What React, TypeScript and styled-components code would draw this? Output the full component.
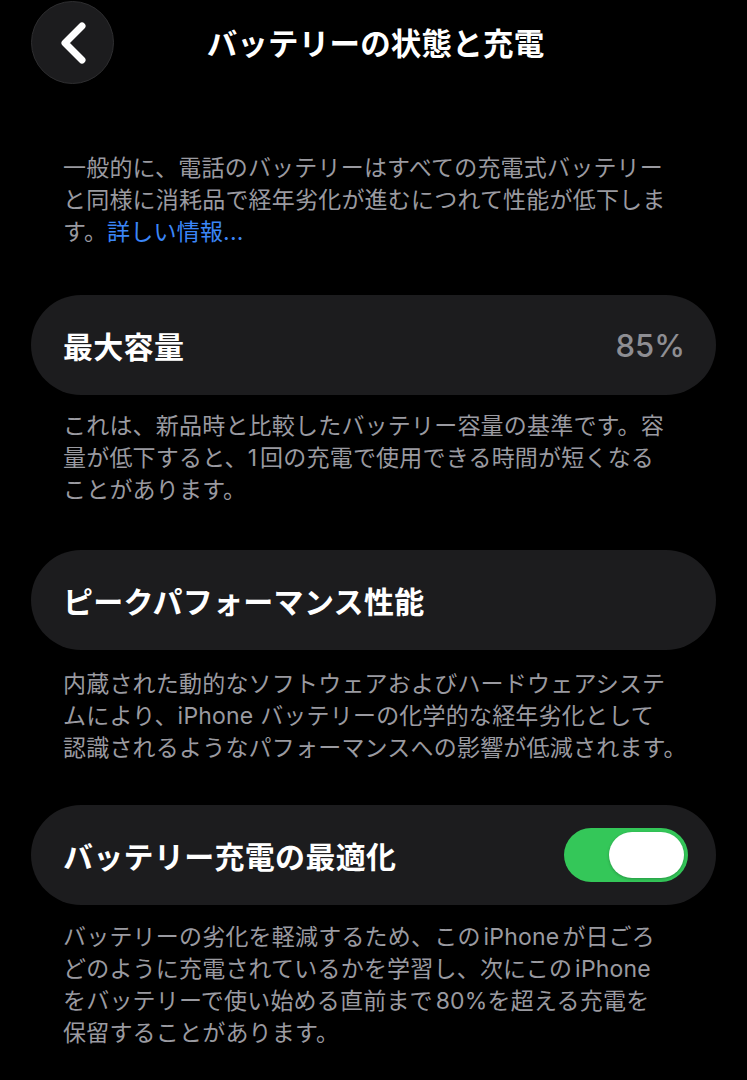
import React, { useState } from 'react';
import styled, { createGlobalStyle } from 'styled-components';

const GlobalStyle = createGlobalStyle`
  html, body {
    margin: 0;
    padding: 0;
    background: #000;
  }
  body {
    font-family: Inter, "Noto Sans CJK JP", sans-serif;
    -webkit-font-smoothing: antialiased;
  }
`;

const Page = styled.div`
  min-height: 1080px;
  background: #000;
  padding: 0 31px 40px;
  box-sizing: border-box;
`;

const Header = styled.header`
  display: grid;
  grid-template-columns: 1fr auto 1fr;
  align-items: center;
  height: 84px;
`;

const BackButton = styled.button`
  width: 83px;
  height: 83px;
  border-radius: 50%;
  background: #1c1c1e;
  border: 1.5px solid #2e2e30;
  display: flex;
  align-items: center;
  justify-content: center;
  padding: 0;
  margin-top: 1px;
  cursor: pointer;
  justify-self: start;
`;

const Title = styled.h1`
  margin: 0;
  color: #fff;
  font-size: 30.5px;
  font-weight: 700;
  letter-spacing: 0.2px;
  padding-left: 4px;
`;

const Note = styled.p<{ $top: number }>`
  margin: ${(p) => p.$top}px 0 0;
  padding: 0 32px;
  color: #9a9aa0;
  font-size: 23px;
  line-height: 32px;
  letter-spacing: 0.2px;
  white-space: nowrap;
  text-autospace: normal;
`;

const Link = styled.a`
  color: #3b86f7;
  text-decoration: none;
`;

const Card = styled.div<{ $top: number }>`
  margin-top: ${(p) => p.$top}px;
  height: 100px;
  border-radius: 50px;
  background: #1c1c1e;
  display: flex;
  align-items: center;
  justify-content: space-between;
  padding: 0 31px 0 32px;
`;

const Label = styled.span`
  color: #fff;
  font-size: 30px;
  font-weight: 700;
  letter-spacing: 0.3px;
`;

const Value = styled.span`
  color: #8e8e93;
  font-size: 31px;
  font-weight: 500;
`;

const Track = styled.button<{ $on: boolean }>`
  width: 124px;
  height: 54px;
  border-radius: 27px;
  border: none;
  padding: 4px;
  margin-right: -3px;
  background: ${(p) => (p.$on ? '#34c759' : '#39393d')};
  display: flex;
  justify-content: ${(p) => (p.$on ? 'flex-end' : 'flex-start')};
  cursor: pointer;
`;

const Knob = styled.span`
  width: 75px;
  height: 46px;
  border-radius: 23px;
  background: #fff;
  box-shadow: 0 1px 3px rgba(0, 0, 0, 0.25);
`;

const Lines: React.FC<{ lines: React.ReactNode[] }> = ({ lines }) => (
  <>
    {lines.map((l, i) => (
      <React.Fragment key={i}>
        {l}
        {i < lines.length - 1 && <br />}
      </React.Fragment>
    ))}
  </>
);

const Chevron = () => (
  <svg width="40" height="50" viewBox="0 0 40 50" fill="none">
    <path
      d="M29 8 L12 25 L29 42"
      stroke="#fff"
      strokeWidth="7"
      strokeLinecap="round"
      strokeLinejoin="round"
    />
  </svg>
);

const App: React.FC = () => {
  const [optimized, setOptimized] = useState(true);

  return (
    <>
      <GlobalStyle />
      <Page>
        <Header>
          <BackButton aria-label="戻る">
            <Chevron />
          </BackButton>
          <Title>バッテリーの状態と充電</Title>
          <div />
        </Header>

        <Note $top={68}>
          <Lines
            lines={[
              '一般的に、電話のバッテリーはすべての充電式バッテリー',
              'と同様に消耗品で経年劣化が進むにつれて性能が低下しま',
              <>
                す。<Link href="#">詳しい情報...</Link>
              </>,
            ]}
          />
        </Note>

        <Card $top={47}>
          <Label>最大容量</Label>
          <Value>85%</Value>
        </Card>
        <Note $top={15}>
          <Lines
            lines={[
              'これは、新品時と比較したバッテリー容量の基準です。容',
              '量が低下すると、1回の充電で使用できる時間が短くなる',
              'ことがあります。',
            ]}
          />
        </Note>

        <Card $top={44}>
          <Label>ピークパフォーマンス性能</Label>
        </Card>
        <Note $top={18}>
          <Lines
            lines={[
              '内蔵された動的なソフトウェアおよびハードウェアシステ',
              'ムにより、iPhone バッテリーの化学的な経年劣化として',
              '認識されるようなパフォーマンスへの影響が低減されます。',
            ]}
          />
        </Note>

        <Card $top={41}>
          <Label>バッテリー充電の最適化</Label>
          <Track
            $on={optimized}
            onClick={() => setOptimized(!optimized)}
            aria-label="バッテリー充電の最適化"
          >
            <Knob />
          </Track>
        </Card>
        <Note $top={16}>
          <Lines
            lines={[
              'バッテリーの劣化を軽減するため、このiPhoneが日ごろ',
              'どのように充電されているかを学習し、次にこのiPhone',
              'をバッテリーで使い始める直前まで80%を超える充電を',
              '保留することがあります。',
            ]}
          />
        </Note>
      </Page>
    </>
  );
};

export default App;
